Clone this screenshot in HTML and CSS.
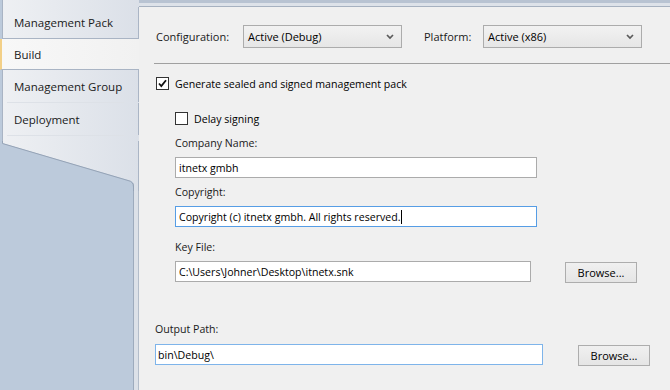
FILE: index.html
```html
<!DOCTYPE html>
<html lang="en">
<head>
    <meta charset="UTF-8">
    <title>Build</title>
    <link rel="stylesheet" href="styles.css">
</head>
<body>
    <div class="sidebar">
        <div class="tabs">
            <div class="tab first">Management Pack</div>
            <div class="tab selected">Build</div>
            <div class="tab soft">Management Group</div>
            <div class="tab soft">Deployment</div>
        </div>
        <svg class="tab-foot" width="139" height="50" viewBox="0 0 139 50">
            <defs>
                <linearGradient id="panelGrad" gradientUnits="userSpaceOnUse" x1="2" y1="0" x2="139" y2="0">
                    <stop offset="0" stop-color="#eef0f3"/>
                    <stop offset="1" stop-color="#dbe0e8"/>
                </linearGradient>
            </defs>
            <path d="M2,0 H139 V50 H134 V45 Q134,40 128,39 L2,2 Z" fill="url(#panelGrad)"/>
            <path d="M2.5,0 V2.5 L128,39.5 Q133.5,40.5 133.5,46 V50" fill="none" stroke="#95a3b6" stroke-width="1"/>
            <path d="M138.5,0 V50" stroke="#aab5c5" stroke-width="1"/>
        </svg>
    </div>

    <div class="content">
        <div class="band"></div>

        <div class="toolbar">
            <span class="config-label">Configuration:</span>
            <div class="combo">
                <span>Active (Debug)</span>
                <svg class="chevron" width="8" height="6" viewBox="0 0 8 6"><path d="M1,1 L4,4 L7,1" fill="none" stroke="#5a5a5a" stroke-width="1.7"/></svg>
            </div>
            <span class="platform-label">Platform:</span>
            <div class="combo">
                <span>Active (x86)</span>
                <svg class="chevron" width="8" height="6" viewBox="0 0 8 6"><path d="M1,1 L4,4 L7,1" fill="none" stroke="#5a5a5a" stroke-width="1.7"/></svg>
            </div>
        </div>

        <div class="rule"></div>

        <label class="check-row sealed">
            <span class="box">
                <svg width="11" height="11" viewBox="0 0 11 11"><path d="M2,5.5 L4.3,8 L9,2.2" fill="none" stroke="#111" stroke-width="1.8"/></svg>
            </span>
            Generate sealed and signed management pack
        </label>

        <div class="signing">
            <label class="check-row delay">
                <span class="box"></span>
                Delay signing
            </label>

            <div class="label company-label">Company Name:</div>
            <div class="textbox wide">itnetx gmbh</div>

            <div class="label">Copyright:</div>
            <div class="textbox wide focused">Copyright (c) itnetx gmbh. All rights reserved.<span class="caret"></span></div>

            <div class="label key-label">Key File:</div>
            <div class="file-row">
                <div class="textbox key">C:\Users\Johner\Desktop\itnetx.snk</div>
                <button class="browse key-browse">Browse...</button>
            </div>
        </div>

        <div class="label output-label">Output Path:</div>
        <div class="file-row output-row">
            <div class="textbox output">bin\Debug\</div>
            <button class="browse output-browse">Browse...</button>
        </div>
    </div>
</body>
</html>
```

FILE: styles.css
```css
* {
    margin: 0;
    padding: 0;
    box-sizing: border-box;
}

body {
    width: 670px;
    height: 390px;
    overflow: hidden;
    display: flex;
    font-family: 'Open Sans', 'Noto Sans', sans-serif;
    font-size: 10.6px;
    color: #1a1a1a;
    background: #f0f0f0;
}

/* left tab strip */
.sidebar {
    width: 139px;
    flex-shrink: 0;
    background: linear-gradient(90deg, #bccadb 133px, #9dabbd 133px 134px, #dce1e8 134px 138px, #b3bdca 138px);
}

.tabs {
    margin-left: 2px;
    padding-top: 7px;
    padding-bottom: 6px;
    border-left: 1px solid #a9b4c4;
    background: linear-gradient(90deg, #eef0f3, #dbe0e8);
    font-size: 11.5px;
}

.tab {
    height: 32px;
    display: flex;
    align-items: center;
    padding-left: 11px;
    border-right: 1px solid #aab5c5;
}

.tab.first {
    border-bottom: 1px solid #a9b4c4;
}

.tab.selected {
    height: 31px;
    margin-left: -3px;
    padding-left: 12px;
    border-left: 2px solid #f3d088;
    border-right: none;
    border-bottom: 1px solid #a9b4c4;
    background: linear-gradient(90deg, #f8f8f8, #f1f1f1);
}

.tab.soft {
    position: relative;
}

.tab.soft::after {
    content: '';
    position: absolute;
    left: 4px;
    right: 14px;
    bottom: -1px;
    height: 1px;
    background: #dde1e7;
}

.tab.soft + .tab.soft {
    margin-top: 1px;
}

.tab-foot {
    display: block;
}

/* right pane */
.content {
    flex: 1;
    background: #f0f0f0;
}

.band {
    height: 7px;
    background: linear-gradient(180deg, #b8c3d2 0 3px, #dde2e9 3px 6px, #a6b1c0 6px);
}

.toolbar {
    display: flex;
    align-items: center;
    margin-top: 18px;
    padding-left: 17px;
}

.config-label {
    width: 87px;
    font-size: 11px;
}

.platform-label {
    width: 59px;
    margin-left: 22px;
    font-size: 11px;
}

.combo {
    width: 159px;
    height: 23px;
    display: flex;
    align-items: center;
    justify-content: space-between;
    padding: 0 7px 0 4px;
    border: 1px solid #acacac;
    background: linear-gradient(180deg, #f2f2f2, #e6e6e6);
    color: #000;
    font-size: 11px;
}

.rule {
    height: 1px;
    margin: 15px 0 0 15px;
    background: #a0a0a0;
}

.check-row {
    display: flex;
    align-items: center;
    gap: 6px;
    height: 13px;
    color: #000;
}

.sealed {
    margin: 13px 0 0 17px;
}

.box {
    width: 13px;
    height: 13px;
    border: 1px solid #333;
    background: #fff;
    display: flex;
    align-items: center;
    justify-content: center;
}

.signing {
    padding-left: 36px;
}

.delay {
    margin-top: 22px;
}

.label {
    height: 16px;
    line-height: 16px;
    margin: 6px 0 6px;
}

.company-label {
    margin-top: 10px;
}

.key-label {
    margin-top: 12px;
}

.output-label {
    margin: 38px 0 7px 16px;
}

.textbox {
    height: 21px;
    display: flex;
    align-items: center;
    padding-left: 3px;
    border: 1px solid #ababab;
    background: #fff;
    color: #000;
    white-space: nowrap;
}

.textbox.wide {
    width: 362px;
}

.textbox.focused {
    border-color: #569de5;
}

.caret {
    display: inline-block;
    width: 1px;
    height: 14px;
    margin-left: 1px;
    background: #000;
}

.file-row {
    display: flex;
    align-items: flex-start;
}

.textbox.key {
    width: 356px;
}

.output-row {
    padding-left: 16px;
}

.textbox.output {
    width: 388px;
    padding-left: 2px;
    border-color: #7eb4ea;
}

.browse {
    width: 72px;
    height: 21px;
    margin-top: 1px;
    border: 1px solid #adadad;
    background: linear-gradient(180deg, #f0f0f0, #e5e5e5);
    font-family: inherit;
    font-size: 11px;
    color: #000;
}

.key-browse {
    margin-left: 34px;
}

.output-browse {
    margin-left: 35px;
}
```
